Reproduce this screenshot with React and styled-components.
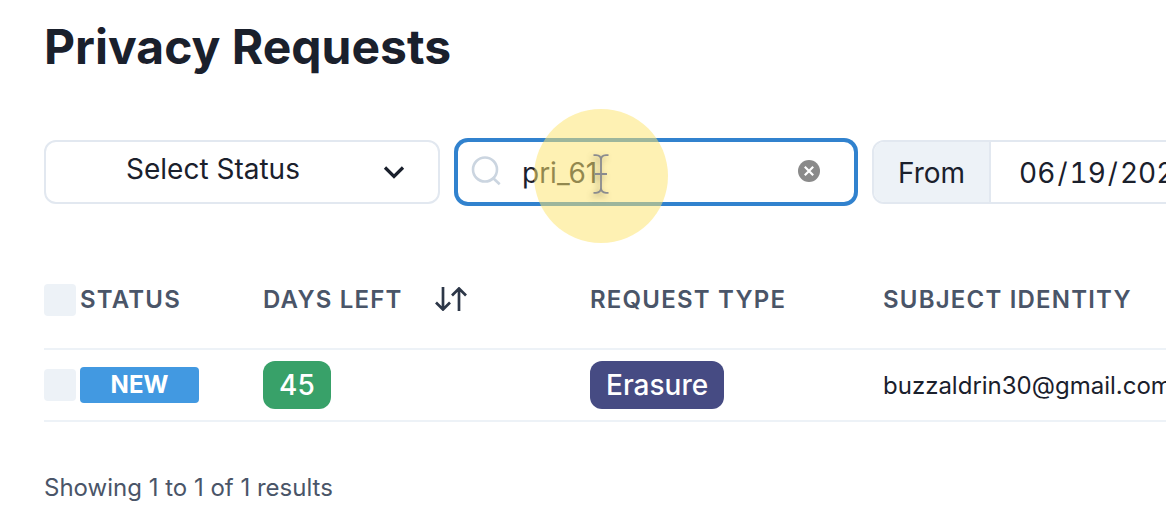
import React from "react";
import styled, { createGlobalStyle } from "styled-components";

const GlobalStyle = createGlobalStyle`
  *, *::before, *::after { box-sizing: border-box; }
  body {
    margin: 0;
    background: #fff;
    color: #1a202c;
    font-family: Inter, "Liberation Sans", sans-serif;
    font-size: 28px;
    overflow-x: hidden;
  }
  input, select, button { font: inherit; color: inherit; }
`;

const Page = styled.main`
  padding: 16px 0 16px 44px;
  overflow: hidden;
`;

const Title = styled.h1`
  margin: 0;
  font-size: 48px;
  line-height: 62px;
  font-weight: 700;
`;

const Toolbar = styled.form`
  display: flex;
  gap: 16px;
  margin-top: 62px;
`;

const Field = styled.div`
  position: relative;
  display: flex;
  flex: none;
  width: ${(p) => p.$width};
  height: 64px;
`;

const StatusSelect = styled.select`
  appearance: none;
  width: 100%;
  padding: 0 80px 6px;
  border: 2px solid #e2e8f0;
  border-radius: 12px;
  background: #fff;
  outline: none;
`;

const FieldIcon = styled.svg`
  position: absolute;
  top: 50%;
  transform: translateY(-50%);
  left: ${(p) => p.$left || "auto"};
  right: ${(p) => p.$right || "auto"};
  pointer-events: none;
`;

const SearchInput = styled.input`
  width: 100%;
  padding: 2px 64px 0 64px;
  border: 2px solid #3182ce;
  border-radius: 12px;
  box-shadow: 0 0 0 2px #3182ce;
  background: #fff;
  outline: none;
`;

const ClearButton = styled.button`
  position: absolute;
  top: 20px;
  right: 36px;
  display: flex;
  padding: 0;
  border: 0;
  background: none;
`;

const Spotlight = styled.div`
  position: absolute;
  left: 78px;
  top: -31px;
  width: 134px;
  height: 134px;
  padding-bottom: 4px;
  display: grid;
  place-items: center;
  border-radius: 50%;
  background: rgba(253, 229, 112, 0.53);
  pointer-events: none;

  svg { filter: drop-shadow(-2px 3px 3px rgba(60, 50, 20, 0.4)); }
`;

const DateGroup = styled.div`
  display: flex;
  flex: 1 0 440px;
  height: 64px;
  border: 2px solid #e2e8f0;
  border-radius: 12px;
  overflow: hidden;
`;

const DateLabel = styled.label`
  display: flex;
  align-items: center;
  padding: 2px 24px 0;
  border-right: 2px solid #e2e8f0;
  background: #edf2f7;
`;

const DateInput = styled.input`
  flex: 1;
  padding: 2px 24px 0 26px;
  border: 0;
  background: #fff;
  font-variant-numeric: tabular-nums;
  outline: none;

  &::-webkit-datetime-edit-month-field,
  &::-webkit-datetime-edit-day-field,
  &::-webkit-datetime-edit-year-field { padding: 0 2px; }
`;

const Table = styled.table`
  width: 100%;
  margin-top: 48px;
  border-collapse: separate;
  border-spacing: 0;
  table-layout: fixed;
  font-size: 24px;
  white-space: nowrap;
`;

const Col = styled.col`
  width: ${(p) => p.$width || "auto"};
`;

const HeadCell = styled.th`
  height: 98px;
  padding: 0;
  border-bottom: 2px solid #edf2f7;
  color: #4a5568;
  font-weight: 600;
  line-height: 32px;
  letter-spacing: 0.05em;
  text-align: left;
  text-transform: uppercase;
`;

const Cell = styled.td`
  height: 72px;
  padding: 0;
  border-bottom: 2px solid #edf2f7;
`;

const Checkbox = styled.input`
  appearance: none;
  display: block;
  width: 32px;
  height: 32px;
  margin: 0;
  border-radius: 4px;
  background: #edf2f7;
`;

const SortButton = styled.button`
  display: inline-flex;
  margin-left: 32px;
  padding: 0 0 4px;
  border: 0;
  background: none;
  vertical-align: middle;
`;

const StatusBadge = styled.span`
  display: block;
  width: 119px;
  border-radius: 4px;
  background: #4299e1;
  color: #fff;
  font-weight: 700;
  line-height: 36px;
  text-align: center;
`;

const Tag = styled.span`
  display: inline-block;
  padding: 0 16px;
  border-radius: 12px;
  background: ${(p) => p.$color};
  color: #fff;
  font-size: 28px;
  font-weight: 500;
  line-height: 48px;
  vertical-align: middle;
`;

const Summary = styled.p`
  margin: 48px 0 0;
  color: #4a5568;
  font-size: 24px;
  line-height: 36px;
`;

const rows = [
  { status: "NEW", days: 45, type: "Erasure", identity: "buzzaldrin30@gmail.com" },
];

export default function App() {
  return (
    <Page>
      <GlobalStyle />
      <Title>Privacy Requests</Title>

      <Toolbar onSubmit={(e) => e.preventDefault()}>
        <Field $width="396px">
          <StatusSelect aria-label="Select Status" defaultValue="">
            <option value="">Select Status</option>
            <option value="new">New</option>
          </StatusSelect>
          <FieldIcon $right="34px" width="24" height="24" viewBox="0 0 24 24" aria-hidden="true">
            <path d="M3 7.5l9 9 9-9" fill="none" stroke="#1a202c" strokeWidth="3.2" />
          </FieldIcon>
        </Field>

        <Field $width="400px">
          <SearchInput type="text" aria-label="Search" defaultValue="pri_61" />
          <FieldIcon $left="15px" width="30" height="32" viewBox="0 0 30 32" aria-hidden="true">
            <g fill="none" stroke="#cbd5e0" strokeWidth="2.6">
              <circle cx="14" cy="13.5" r="12" />
              <path d="M21.5 21.5l7.2 6.8" />
            </g>
          </FieldIcon>
          <ClearButton type="button" aria-label="Clear search">
            <svg width="22" height="22" viewBox="0 0 22 22" aria-hidden="true">
              <circle cx="11" cy="11" r="11" fill="#8a8a8a" />
              <path d="M6.8 6.8l8.4 8.4M15.2 6.8l-8.4 8.4" stroke="#fff" strokeWidth="2.2" />
            </svg>
          </ClearButton>
          <Spotlight aria-hidden="true">
            <svg width="16" height="40" viewBox="0 0 16 40">
              <path
                d="M.5 1.2H3Q8 1.5 8 6Q8 1.5 13 1.2h2.5M8 5v30M.5 38.8H3Q8 38.5 8 34Q8 38.5 13 38.8h2.5M2 20h12"
                fill="none"
                stroke="#8a8b8e"
                strokeWidth="1.8"
              />
            </svg>
          </Spotlight>
        </Field>

        <DateGroup>
          <DateLabel htmlFor="from-date">From</DateLabel>
          <DateInput id="from-date" type="date" defaultValue="2022-06-19" />
        </DateGroup>
      </Toolbar>

      <Table>
        <colgroup>
          <Col $width="36px" />
          <Col $width="183px" />
          <Col $width="327px" />
          <Col $width="293px" />
          <Col />
        </colgroup>
        <thead>
          <tr>
            <HeadCell scope="col">
              <Checkbox type="checkbox" aria-label="Select all requests" />
            </HeadCell>
            <HeadCell scope="col">Status</HeadCell>
            <HeadCell scope="col">
              Days Left
              <SortButton type="button" aria-label="Sort by days left">
                <svg width="32" height="24" viewBox="0 0 32 24" aria-hidden="true">
                  <path
                    d="M8 0v22M1 15.5l7 7 7-7M24 24V2M17 8.5l7-7 7 7"
                    fill="none"
                    stroke="#2d3748"
                    strokeWidth="2.7"
                  />
                </svg>
              </SortButton>
            </HeadCell>
            <HeadCell scope="col">Request Type</HeadCell>
            <HeadCell scope="col">Subject Identity</HeadCell>
          </tr>
        </thead>
        <tbody>
          {rows.map((row) => (
            <tr key={row.identity}>
              <Cell>
                <Checkbox type="checkbox" aria-label={`Select ${row.identity}`} />
              </Cell>
              <Cell>
                <StatusBadge>{row.status}</StatusBadge>
              </Cell>
              <Cell>
                <Tag $color="#38a169">{row.days}</Tag>
              </Cell>
              <Cell>
                <Tag $color="#464b83">{row.type}</Tag>
              </Cell>
              <Cell>{row.identity}</Cell>
            </tr>
          ))}
        </tbody>
      </Table>

      <Summary>Showing 1 to 1 of 1 results</Summary>
    </Page>
  );
}
